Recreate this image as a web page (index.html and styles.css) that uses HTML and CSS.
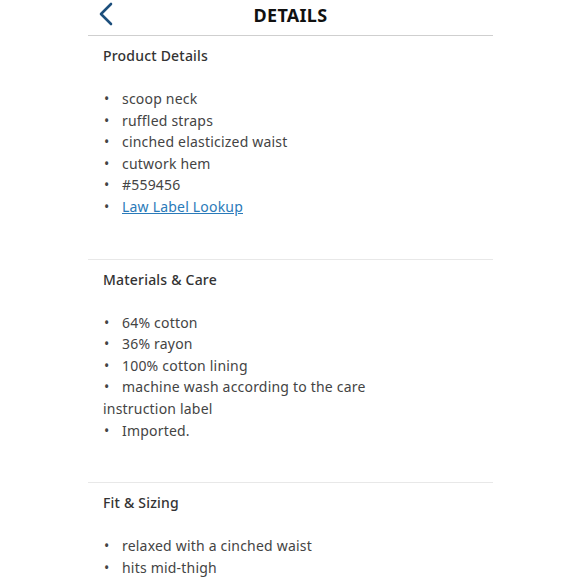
FILE: index.html
```html
<!DOCTYPE html>
<html>
<head>
<meta charset="utf-8">
<link rel="stylesheet" href="styles.css">
</head>
<body>
<div class="page">
  <header class="header">
    <a class="back" href="#">
      <svg width="16" height="24" viewBox="0 0 16 24"><path d="M13 2 L3 12 L13 22" fill="none" stroke="#1d4f7c" stroke-width="2.6" stroke-linecap="round" stroke-linejoin="round"/></svg>
    </a>
    <h1 class="title">DETAILS</h1>
  </header>
  <section class="section">
    <h2 class="sec-title">Product Details</h2>
    <ul class="list">
      <li><span class="dot">•</span>scoop neck</li>
      <li><span class="dot">•</span>ruffled straps</li>
      <li><span class="dot">•</span>cinched elasticized waist</li>
      <li><span class="dot">•</span>cutwork hem</li>
      <li><span class="dot">•</span>#559456</li>
      <li><span class="dot">•</span><a class="link" href="#">Law Label Lookup</a></li>
    </ul>
  </section>
  <section class="section">
    <h2 class="sec-title">Materials &amp; Care</h2>
    <ul class="list">
      <li><span class="dot">•</span>64% cotton</li>
      <li><span class="dot">•</span>36% rayon</li>
      <li><span class="dot">•</span>100% cotton lining</li>
      <li><span class="dot">•</span>machine wash according to the care instruction label</li>
      <li><span class="dot">•</span>Imported.</li>
    </ul>
  </section>
  <section class="section">
    <h2 class="sec-title">Fit &amp; Sizing</h2>
    <ul class="list">
      <li><span class="dot">•</span>relaxed with a cinched waist</li>
      <li><span class="dot">•</span>hits mid-thigh</li>
    </ul>
  </section>
</div>
</body>
</html>
```
FILE: styles.css
```css
html, body {
  margin: 0;
  padding: 0;
  background: #fff;
}
body {
  font-family: "Noto Sans", "DejaVu Sans", sans-serif;
  color: #444;
  overflow: hidden;
}
.page {
  width: 405px;
  margin-left: 88px;
}
.header {
  position: relative;
  height: 35px;
  border-bottom: 1.5px solid #cfcfcf;
  display: flex;
  align-items: flex-start;
  justify-content: center;
}
.back {
  position: absolute;
  left: 10px;
  top: 2px;
  display: block;
  line-height: 0;
}
.title {
  margin: 0;
  padding-top: 1px;
  font-size: 18px;
  font-weight: 700;
  color: #111;
  letter-spacing: 0.3px;
  line-height: 28px;
}
.section {
  padding: 10px 15px 41px;
}
.section + .section {
  border-top: 1px solid #e8e8e8;
}
.sec-title {
  margin: 0 0 22px;
  font-size: 14px;
  font-weight: 500;
  color: #333;
  line-height: 20px;
  letter-spacing: 0.2px;
}
.list {
  list-style: none;
  margin: 0;
  padding: 0;
  width: 300px;
  font-size: 14px;
  line-height: 21.6px;
  letter-spacing: 0.2px;
  color: #444;
}
.dot {
  display: inline-block;
  width: 19px;
  padding-left: 1px;
  box-sizing: border-box;
  letter-spacing: 0;
}
.link {
  color: #2a7ab9;
  text-decoration: underline;
}
```
